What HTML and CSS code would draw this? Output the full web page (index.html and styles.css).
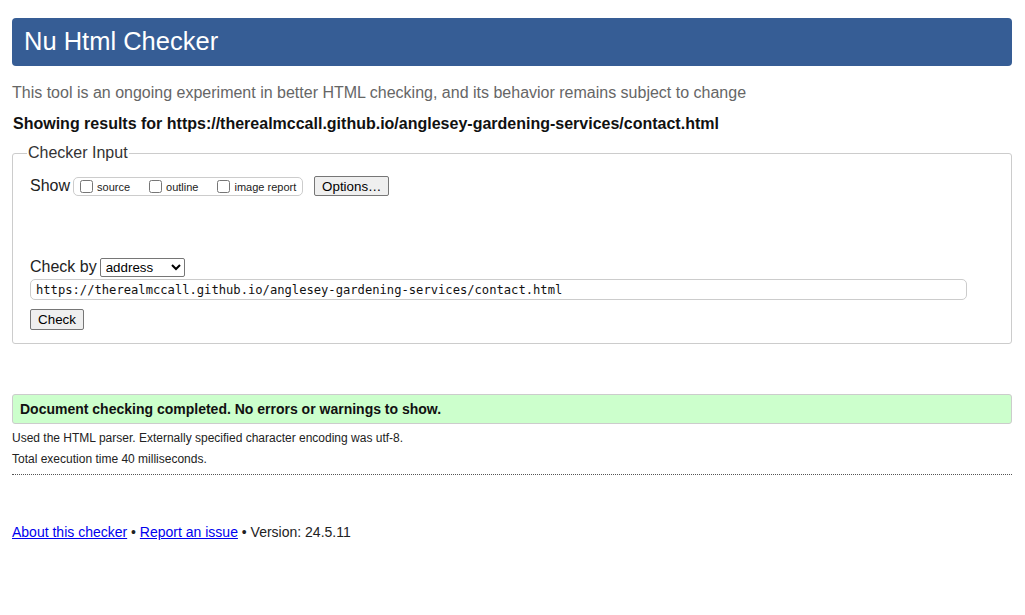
FILE: index.html
```html
<!DOCTYPE html>
<html lang="en">
<head>
<meta charset="utf-8">
<title>Nu Html Checker</title>
<link rel="stylesheet" href="styles.css">
</head>
<body>
<h1 class="title">Nu Html Checker</h1>
<p class="intro">This tool is an ongoing experiment in better HTML checking, and its behavior remains subject to change</p>
<p class="showing">Showing results for https://therealmccall.github.io/anglesey-gardening-services/contact.html</p>
<form class="checker">
  <fieldset class="input-set">
    <legend class="legend">Checker Input</legend>
    <div class="show-row">
      <span class="show-label">Show</span>
      <span class="show-opts">
        <label class="opt"><input type="checkbox" class="cb">source</label>
        <label class="opt"><input type="checkbox" class="cb">outline</label>
        <label class="opt"><input type="checkbox" class="cb">image report</label>
      </span>
      <button type="button" class="btn options">Options…</button>
    </div>
    <div class="checkby-row">
      <span class="checkby-label">Check by</span>
      <select class="sel"><option>address</option></select>
    </div>
    <input class="url" type="text" value="https://therealmccall.github.io/anglesey-gardening-services/contact.html">
    <div class="check-row"><button type="button" class="btn check">Check</button></div>
  </fieldset>
</form>
<p class="success">Document checking completed. No errors or warnings to show.</p>
<p class="details">Used the HTML parser. Externally specified character encoding was utf-8.</p>
<p class="details">Total execution time 40 milliseconds.</p>
<hr class="sep">
<p class="footer"><a href="#" class="link">About this checker</a> • <a href="#" class="link">Report an issue</a> • Version: 24.5.11</p>
</body>
</html>
```
FILE: styles.css
```css
html, body { background: #fff; }
body {
  margin: 0;
  padding: 18px 13px 0 12px;
  font-family: "Liberation Sans", Arial, sans-serif;
  color: #111;
}
.title {
  margin: 0;
  height: 48px;
  box-sizing: border-box;
  padding: 9px 12px 0 12px;
  background: #365d95;
  color: #fff;
  font-size: 25.5px;
  font-weight: normal;
  border-radius: 4px;
  line-height: 29px;
}
.intro {
  margin: 17px 0 0 0;
  color: #666;
  font-size: 16px;
  line-height: 20px;
}
.showing {
  margin: 11px 0 0 1px;
  font-weight: bold;
  font-size: 16px;
  line-height: 20px;
  color: #111;
}
.checker { margin: 10px 0 0 0; }
.input-set {
  margin: 0;
  border: 1px solid #ccc;
  border-radius: 3px;
  padding: 4px 17px 13px 17px;
  min-height: 0;
  height: 200px;
  box-sizing: border-box;
}
.legend {
  padding: 0 1px;
  font-size: 16px;
  color: #333;
  margin-left: -3px;
}
.show-row {
  display: flex;
  align-items: center;
  margin-top: 9px;
  height: 22px;
}
.show-label { font-size: 16px; color: #222; }
.show-opts {
  display: inline-flex;
  align-items: center;
  margin-left: 3px;
  border: 1px solid #ccc;
  border-radius: 5px;
  height: 17px;
  padding: 0 6px 0 5px;
  gap: 10px;
}
.opt {
  display: inline-flex;
  align-items: center;
  font-size: 11px;
  color: #222;
  margin-right: 8px;
  padding-top: 2px;
}
.opt:last-child { margin-right: 0; }
.cb {
  margin: -2px 4px 0 1px;
  width: 13px;
  height: 13px;
}
.btn {
  font-family: "Liberation Sans", Arial, sans-serif;
  font-size: 13.33px;
  background: #efefef;
  border: 1px solid #767676;
  border-radius: 2px;
  color: #000;
  padding: 1px 6px;
  height: 20px;
  box-sizing: border-box;
}
.options { margin-left: 11px; width: 75px; }
.checkby-row {
  display: flex;
  align-items: center;
  margin-top: 60px;
  height: 20px;
}
.checkby-label { font-size: 16px; color: #222; margin-right: 3px; }
.sel {
  font-family: "Liberation Sans", Arial, sans-serif;
  font-size: 13.33px;
  width: 85px;
  height: 19px;
  padding: 0 0 0 1px;
  border: 1px solid #767676;
  border-radius: 2px;
  background: #fff;
  color: #000;
}
.url {
  display: block;
  margin-top: 2px;
  width: 937px;
  height: 21px;
  box-sizing: border-box;
  border: 1px solid #ccc;
  border-radius: 5px;
  padding: 0 5px;
  font-family: "DejaVu Sans Mono", "Liberation Mono", monospace;
  font-size: 12.15px;
  color: #111;
}
.check-row { margin-top: 9px; }
.check { height: 21px; width: 54px; }
.success {
  margin: 50px 0 0 0;
  background: #ccffcc;
  border: 1px solid #ccc;
  border-radius: 3px;
  height: 30px;
  box-sizing: border-box;
  padding: 6px 7px 0 7px;
  font-size: 14px;
  font-weight: bold;
  line-height: 17px;
  color: #111;
}
.details {
  margin: 6px 0 0 0;
  font-size: 12px;
  line-height: 16px;
  color: #222;
}
.details + .details { margin-top: 5px; }
.sep {
  margin: 7px 0 0 0;
  border: 0;
  border-top: 1px dotted #555;
  height: 0;
}
.footer {
  margin: 49px 0 0 0;
  font-size: 14px;
  line-height: 17px;
  color: #222;
}
.link { color: #00e; text-decoration: underline; }
```
